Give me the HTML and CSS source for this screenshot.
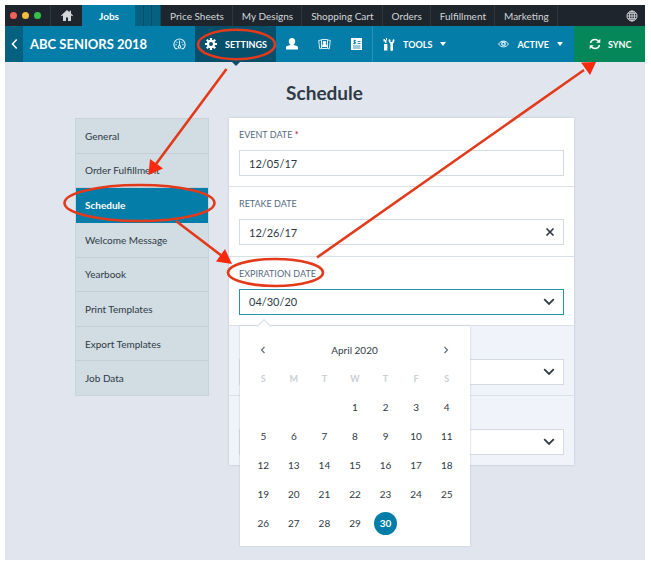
FILE: index.html
```
<!DOCTYPE html>
<html lang="en">

<head>
    <title>Schedule</title>
    <meta charset="utf-8">
    <meta name="viewport" content="width=device-width, initial-scale=1">
    <link rel="stylesheet" href="styles.css">
</head>

<body>
    <div class="app">
        <nav class="tabs">
            <div class="window-dots">
                <span class="dot red"></span>
                <span class="dot yellow"></span>
                <span class="dot green"></span>
            </div>
            <a class="tab home" href="#" aria-label="Home">
                <svg width="12" height="11" viewBox="0 0 12 11"><path fill="#d3d6da" d="M6 0L0 5.4l.8.9L2 5.300V11h3V7.400h2V11h3V5.300l1.200 1 .8-.9-2-1.800V.8H8.500v1.500z"/></svg>
            </a>
            <a class="tab current" href="#">Jobs</a>
            <div class="tab-stack"><span></span><span></span><span></span></div>
            <a class="tab" href="#">Price Sheets</a>
            <a class="tab" href="#">My Designs</a>
            <a class="tab" href="#">Shopping Cart</a>
            <a class="tab" href="#">Orders</a>
            <a class="tab" href="#">Fulfillment</a>
            <a class="tab" href="#">Marketing</a>
            <a class="globe" href="#" aria-label="Language">
                <svg width="12" height="12" viewBox="0 0 12 12" fill="none" stroke="#d3d6da"><circle cx="6" cy="6" r="5"/><ellipse cx="6" cy="6" rx="2.4" ry="5"/><path d="M6 1v10M1 6h10M2 3.3h8M2 8.7h8" stroke-width=".9"/></svg>
            </a>
        </nav>

        <header class="job-bar">
            <a class="back" href="#" aria-label="Back">
                <svg width="7" height="12" viewBox="0 0 7 12"><path d="M5.700 1.500L1.500 6l4.200 4.500" fill="none" stroke="#fff" stroke-width="1.600"/></svg>
            </a>
            <span class="job-name">ABC SENIORS 2018</span>
            <a class="icon-link" href="#" aria-label="Dashboard">
                <svg width="13" height="12" viewBox="0 0 13 12" fill="none" stroke="#d9eef5"><path d="M4.500 10.600H2.600A5.600 5.600 0 1 1 10.400 10.600H8.500" stroke-width="1.200"/><path d="M6.500 2.600v5M2.300 6.800h1.500M9.200 6.800h1.500M3.500 3.800l.9.9M9.500 3.800l-.9.9" stroke-width="1.100"/><circle cx="6.500" cy="8.800" r="1.300" stroke-width="1.100"/></svg>
            </a>
            <a class="bar-item settings" href="#">
                <svg width="12" height="12" viewBox="0 0 12 12"><g fill="none" stroke="#fff"><circle cx="6" cy="6" r="3.100" stroke-width="2.200"/><path stroke-width="2.200" d="M6 0v2.200M6 9.800V12M0 6h2.200M9.800 6H12M1.800 1.800l1.500 1.500M8.700 8.700l1.500 1.500M1.800 10.200l1.500-1.500M8.700 3.300l1.500-1.500"/></g></svg>
                SETTINGS
            </a>
            <a class="icon-link" href="#" aria-label="Subjects">
                <svg width="12" height="12" viewBox="0 0 12 12"><path fill="#fff" d="M6 0c2.200 0 3.200 1.500 3.200 3.300 0 1.400-.6 2.600-1.500 3.200v.5l3.200 1c.8.300 1.100.9 1.100 1.700V11.500H0V9.700c0-.8.300-1.400 1.100-1.700l3.200-1v-.5c-.9-.6-1.500-1.800-1.500-3.200C2.800 1.500 3.800 0 6 0z"/></svg>
            </a>
            <a class="icon-link" href="#" aria-label="Photos">
                <svg width="13" height="12" viewBox="0 0 13 12"><path fill="none" stroke="#d9eef5" d="M3.500 1.500h6v9h-6zM3 2L.7 2.500l1 8.300 1.500-.2M10 2l2.300.5-1 8.300-1.500-.2"/><path fill="#fff" d="M6.500 3.200a1.400 1.400 0 0 1 .8 2.700l1.500.8V9H4.200V6.700l1.500-.8a1.400 1.400 0 0 1 .8-2.700z"/></svg>
            </a>
            <a class="icon-link" href="#" aria-label="Orders">
                <svg width="11" height="12" viewBox="0 0 11 12"><path fill="#fff" d="M0 0h11v12H0z"/><path fill="none" stroke="#047da8" d="M6.500 3.500h3M6.500 5.500h3M2 8h7.500M2 10h7.500M4.900 2.500H3v1.500h1.500v1.500H2.200M3.500 1.700v4.600" stroke-width=".8"/></svg>
            </a>
            <div class="bar-item tools">
                <svg width="12" height="13" viewBox="0 0 12 13"><path fill="#fff" d="M.5 1H2v1h1V0h1v2l-.6.8V5h-1.500V3.500H.5zM1 6h3.400v6.500H1zM6 1l1.500 1v2h2V2L11 1c.9 1.500.6 3.300-1 4.400v6.300a1.300 1.300 0 0 1-2.600 0V5.400C5.600 4.500 5.200 2.500 6 1z"/></svg>
                TOOLS
                <span class="caret"></span>
            </div>
            <div class="bar-item status">
                <svg width="11" height="8" viewBox="0 0 11 8" fill="none" stroke="#e6f4f8"><path d="M.6 4C3 .1 8 .1 10.400 4 8 7.900 3 7.900.6 4z"/><circle cx="5.500" cy="3.700" r="1.700" stroke-width="1.300"/></svg>
                ACTIVE
                <span class="caret"></span>
            </div>
            <button class="sync" type="button">
                <svg width="12" height="12" viewBox="0 0 12 12"><path d="M1.500 5C2 2.800 3.800 1.500 6 1.500c1.500 0 2.700.6 3.600 1.700M10.500 7c-.5 2.200-2.300 3.500-4.500 3.500-1.500 0-2.700-.6-3.600-1.700" fill="none" stroke="#fff" stroke-width="1.400"/><path fill="#fff" d="M11.300.8v4H7.300zM.7 11.200v-4h4z"/></svg>
                SYNC
            </button>
        </header>

        <main class="content">
            <h1>Schedule</h1>
            <div class="columns">
                <nav class="side-menu">
                    <a href="#">General</a>
                    <a href="#">Order Fulfillment</a>
                    <a class="selected" href="#">Schedule</a>
                    <a href="#">Welcome Message</a>
                    <a href="#">Yearbook</a>
                    <a href="#">Print Templates</a>
                    <a href="#">Export Templates</a>
                    <a href="#">Job Data</a>
                </nav>

                <form class="panel">
                    <div class="field">
                        <label for="event-date">EVENT DATE <span class="required">*</span></label>
                        <div class="control"><input id="event-date" type="text" value="12/05/17"></div>
                    </div>
                    <div class="field">
                        <label for="retake-date">RETAKE DATE</label>
                        <div class="control">
                            <input id="retake-date" type="text" value="12/26/17">
                            <button type="button" aria-label="Clear"><svg width="10" height="10" viewBox="0 0 10 10"><path d="M1.500 1.500l7 7M8.500 1.500l-7 7" fill="none" stroke="#2f3a44" stroke-width="1.700"/></svg></button>
                        </div>
                    </div>
                    <div class="field">
                        <label for="expiration-date">EXPIRATION DATE</label>
                        <div class="control open">
                            <input id="expiration-date" type="text" value="04/30/20">
                            <button type="button" aria-label="Toggle calendar"><svg width="12" height="8" viewBox="0 0 12 8"><path d="M1.200 1.200L6 6l4.800-4.800" fill="none" stroke="#2f3a44" stroke-width="1.800"/></svg></button>
                            <div class="calendar">
                                <div class="calendar-head">
                                    <button type="button" aria-label="Previous month"><svg width="6" height="8" viewBox="0 0 6 8"><path d="M4.500 1L1.500 4l3 3" fill="none" stroke="#5c6670" stroke-width="1.100"/></svg></button>
                                    <span>April 2020</span>
                                    <button type="button" aria-label="Next month"><svg width="6" height="8" viewBox="0 0 6 8"><path d="M1.500 1l3 3-3 3" fill="none" stroke="#5c6670" stroke-width="1.100"/></svg></button>
                                </div>
                                <table>
                                    <thead>
                                        <tr><th>S</th><th>M</th><th>T</th><th>W</th><th>T</th><th>F</th><th>S</th></tr>
                                    </thead>
                                    <tbody>
                                        <tr><td></td><td></td><td></td><td>1</td><td>2</td><td>3</td><td>4</td></tr>
                                        <tr><td>5</td><td>6</td><td>7</td><td>8</td><td>9</td><td>10</td><td>11</td></tr>
                                        <tr><td>12</td><td>13</td><td>14</td><td>15</td><td>16</td><td>17</td><td>18</td></tr>
                                        <tr><td>19</td><td>20</td><td>21</td><td>22</td><td>23</td><td>24</td><td>25</td></tr>
                                        <tr><td>26</td><td>27</td><td>28</td><td>29</td><td><span class="picked">30</span></td><td></td><td></td></tr>
                                    </tbody>
                                </table>
                            </div>
                        </div>
                    </div>
                    <div class="field muted">
                        <div class="control">
                            <select aria-label="Option"></select>
                            <svg class="chevron" width="12" height="8" viewBox="0 0 12 8"><path d="M1.200 1.200L6 6l4.800-4.800" fill="none" stroke="#2f3a44" stroke-width="1.800"/></svg>
                        </div>
                    </div>
                    <div class="field muted">
                        <div class="control">
                            <select aria-label="Option"></select>
                            <svg class="chevron" width="12" height="8" viewBox="0 0 12 8"><path d="M1.200 1.200L6 6l4.800-4.800" fill="none" stroke="#2f3a44" stroke-width="1.800"/></svg>
                        </div>
                    </div>
                </form>
            </div>
        </main>
    </div>

    <!-- walkthrough arrows: settings > schedule > expiration date > sync -->
    <svg class="walkthrough" width="651" height="567" viewBox="0 0 651 567">
        <g fill="none" stroke="#e23a1a" stroke-width="2.600">
            <ellipse cx="236.500" cy="44.500" rx="38.500" ry="14.700"/>
            <ellipse cx="139.500" cy="203" rx="75" ry="18"/>
            <ellipse cx="275.500" cy="272.500" rx="47.500" ry="13.500"/>
            <path d="M226.500 69L156 164M176 221l46 35M317 257.500L584 70"/>
        </g>
        <path fill="#f8290c" d="M148.500 175l1.500-16 13 9.500zM232 264l-7-15-9 12.500zM596 62l-6 13-9-12.500z"/>
    </svg>
</body>

</html>
```
FILE: styles.css
```
* {
    box-sizing: border-box;
}

body {
    margin: 0;
    padding: 5px 6px 7px 5px;
    font-family: Lato, "Liberation Sans", sans-serif;
    font-size: 10px;
    color: #2f3a44;
    background-color: #ffffff;
}

a {
    color: inherit;
    text-decoration: none;
}

svg {
    display: block;
    flex: none;
}

button {
    padding: 0;
    border: 0;
    background: none;
    font: inherit;
    color: inherit;
    cursor: pointer;
}

.app {
    display: flex;
    flex-direction: column;
    min-height: calc(100vh - 12px);
    background-color: #e1e6ee;
}

/* top tabs */
.tabs {
    display: flex;
    height: 21px;
    background-color: #1e252d;
    color: #d3d6da;
}

.window-dots {
    display: flex;
    align-items: center;
    gap: 5px;
    width: 45px;
    padding-left: 5px;
}

.dot {
    width: 7px;
    height: 7px;
    border-radius: 50%;
}

.red { background-color: #f35f59; }
.yellow { background-color: #f6bd3b; }
.green { background-color: #35c24a; }

.tab {
    display: flex;
    align-items: center;
    padding: 0 8px 0 9px;
    border-right: 1px solid #2e363f;
}

.tab.home {
    width: 32px;
    justify-content: center;
    border-left: 1px solid #2e363f;
    border-right: 0;
}

.tab.current {
    width: 53px;
    justify-content: center;
    border: 0;
    background-color: #047da8;
    color: #ffffff;
    font-weight: bold;
}

.tab-stack {
    display: flex;
    width: 26px;
    background-color: #06607f;
}

.tab-stack span {
    flex: 1;
    border-right: 1px solid #044d68;
}

.globe {
    display: flex;
    align-items: center;
    margin-left: auto;
    padding-right: 7px;
}

/* job bar */
.job-bar {
    display: flex;
    height: 36px;
    background-color: #047da8;
    color: #ffffff;
    font-size: 9px;
    font-weight: bold;
}

.back {
    display: flex;
    align-items: center;
    justify-content: center;
    width: 18px;
    background-color: #06607f;
}

.job-name {
    width: 140px;
    padding-left: 7px;
    font-size: 13px;
    line-height: 36px;
    white-space: nowrap;
}

.icon-link {
    display: flex;
    align-items: center;
    justify-content: center;
    width: 32px;
}

.bar-item {
    display: flex;
    align-items: center;
    gap: 8px;
}

.settings {
    position: relative;
    width: 81px;
    padding-left: 10px;
    background-color: #06506c;
}

.settings::after {
    content: "";
    position: absolute;
    top: 36px;
    left: 37px;
    border: 4px solid transparent;
    border-top-color: #06506c;
    border-bottom: 0;
}

.tools {
    padding-left: 10px;
    border-left: 1px solid #2b91b6;
}

.caret {
    border: 3px solid transparent;
    border-top: 4px solid #ffffff;
    border-bottom: 0;
}

.status {
    margin-left: auto;
    padding-right: 11px;
}

.sync {
    display: flex;
    align-items: center;
    gap: 7px;
    width: 71px;
    padding-left: 15px;
    background-color: #05875a;
    color: #ffffff;
}

/* content */
.content {
    flex: 1;
    padding: 0 71px 0 70px;
}

h1 {
    margin: 0;
    padding: 19px 0 13px;
    font-size: 19px;
    line-height: 24px;
    text-align: center;
}

.columns {
    display: flex;
    align-items: flex-start;
    gap: 20px;
}

.side-menu {
    display: flex;
    flex-direction: column;
    width: 134px;
    min-height: 278px;
    border: 1px solid #c8d2db;
    background-color: #d1dce3;
}

.side-menu a {
    display: flex;
    flex: 1;
    align-items: center;
    padding-left: 9px;
    border-bottom: 1px solid #c3ced7;
}

.side-menu a:last-child {
    border-bottom: 0;
}

.side-menu .selected {
    background-color: #047da8;
    border-color: #047da8;
    color: #ffffff;
    font-weight: bold;
}

.panel {
    display: grid;
    flex: 1;
    grid-auto-rows: 1fr;
    min-height: 347px;
    background-color: #ffffff;
    box-shadow: 0 0 2px #b4bfca;
}

.field {
    display: flex;
    flex-direction: column;
    gap: 9px;
    padding: 11px 10px 10px;
    border-bottom: 1px solid #d9e0e6;
}

.field:last-child {
    border-bottom: 0;
}

.field label {
    font-size: 9px;
    line-height: 12px;
    color: #566a80;
}

.required {
    color: #c8323c;
    font-weight: bold;
}

.muted {
    justify-content: flex-end;
    background-color: #f0f4fa;
}

.control {
    position: relative;
    display: flex;
    align-items: center;
    height: 26px;
    padding-right: 8px;
    border: 1px solid #d3dae0;
    background-color: #ffffff;
}

.control.open {
    border-color: #2a93a8;
}

.control input,
.control select {
    flex: 1;
    min-width: 0;
    height: 24px;
    padding: 0 9px;
    border: 0;
    outline: 0;
    background: none;
    font: inherit;
    color: inherit;
    appearance: none;
}

.control input {
    font-size: 11px;
}

/* date picker */
.calendar {
    position: absolute;
    z-index: 2;
    top: 36px;
    left: 0;
    width: 230px;
    padding: 10px 8px 8px;
    background-color: #ffffff;
    box-shadow: 0 0 2px #b9c3cd;
}

.calendar::before {
    content: "";
    position: absolute;
    top: -5px;
    left: 19px;
    width: 9px;
    height: 9px;
    border: 1px solid #d9e0e6;
    border-right: 0;
    border-bottom: 0;
    background-color: #ffffff;
    transform: rotate(45deg);
}

.calendar-head {
    display: flex;
    align-items: center;
    justify-content: space-between;
    height: 28px;
    padding: 0 13px 0 12px;
}

.calendar table {
    width: 100%;
    table-layout: fixed;
    border-collapse: collapse;
}

.calendar th {
    height: 29px;
    padding: 0;
    color: #c9cfd5;
    font-size: 9px;
}

.calendar td {
    height: 29px;
    padding: 0;
    text-align: center;
}

.picked {
    display: block;
    width: 23px;
    margin: 0 auto;
    border-radius: 50%;
    background-color: #047da8;
    color: #ffffff;
    font-weight: bold;
    line-height: 23px;
}

.walkthrough {
    position: absolute;
    z-index: 3;
    top: 0;
    left: 0;
    pointer-events: none;
}
```
